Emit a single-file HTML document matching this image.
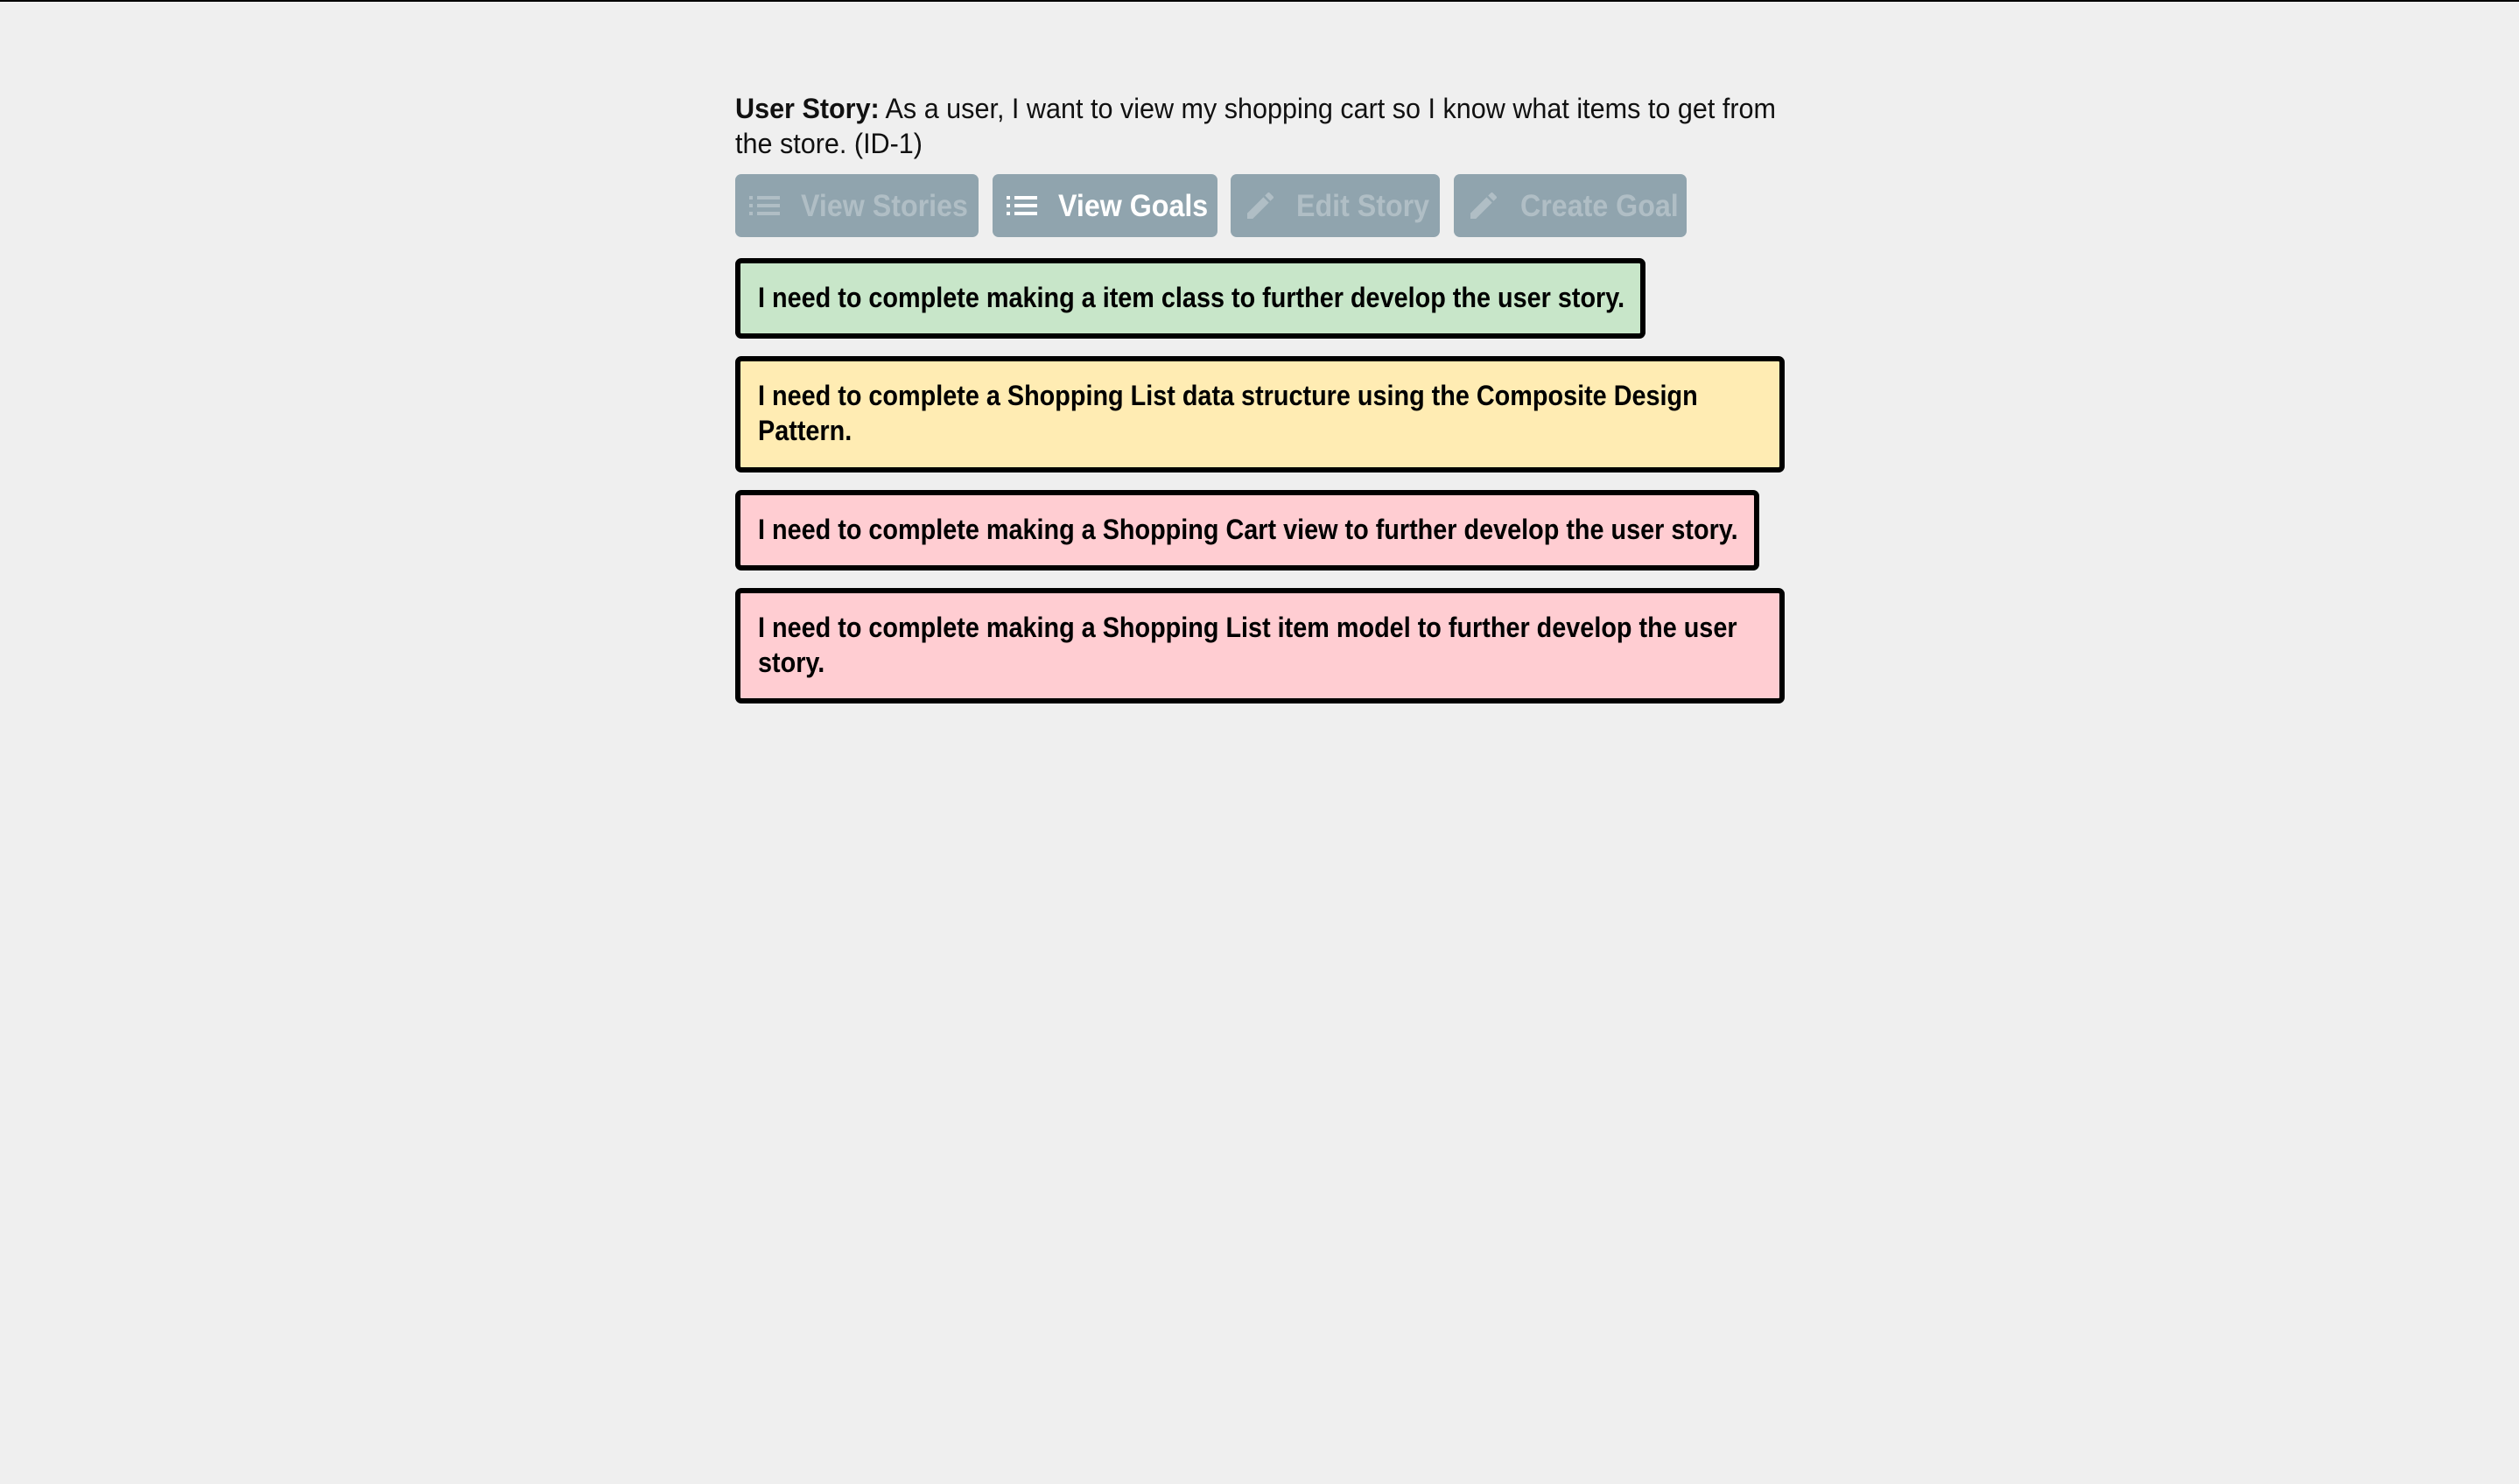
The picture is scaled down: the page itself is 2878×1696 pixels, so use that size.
<!DOCTYPE html>
<html><head><meta charset="utf-8"><style>
html,body{margin:0;padding:0;}
body{width:2878px;height:1696px;background:#efefef;border-top:2px solid #000;box-sizing:border-box;position:relative;font-family:"Liberation Sans",sans-serif;overflow:hidden;}
.s{position:absolute;white-space:nowrap;transform-origin:left center;}
.t{font-size:32px;color:#111;transform:scaleX(0.955);}
.btn{position:absolute;top:197px;height:72px;background:#90a4ae;border-radius:7px;}
.btn span{position:absolute;top:17px;font-size:35px;font-weight:bold;white-space:nowrap;transform:scaleX(0.92);transform-origin:left center;color:#b0bec5;}
.btn svg{position:absolute;top:22px;}
.card{position:absolute;left:840px;border:6px solid #000;border-radius:7px;box-sizing:border-box;}
.card .s{font-size:32px;font-weight:bold;color:#000;transform:scaleX(0.90);left:20px;}
</style></head><body>
<div class="s t" style="left:840px;top:104px;"><b>User Story:</b> As a user, I want to view my shopping cart so I know what items to get from</div>
<div class="s t" style="left:840px;top:144px;">the store. (ID-1)</div>

<div class="btn" style="left:840px;width:278px;">
<svg width="40" height="28" viewBox="0 0 40 28" style="left:16px"><g fill="#b0bec5"><rect x="0" y="3" width="4" height="4"/><rect x="0" y="12" width="4" height="4"/><rect x="0" y="21" width="4" height="4"/><rect x="9" y="3" width="26" height="4"/><rect x="9" y="12" width="26" height="4"/><rect x="9" y="21" width="26" height="4"/></g></svg>
<span style="left:75px">View Stories</span></div>
<div class="btn" style="left:1134px;width:257px;">
<svg width="40" height="28" viewBox="0 0 40 28" style="left:16px"><g fill="#fff"><rect x="0" y="3" width="4" height="4"/><rect x="0" y="12" width="4" height="4"/><rect x="0" y="21" width="4" height="4"/><rect x="9" y="3" width="26" height="4"/><rect x="9" y="12" width="26" height="4"/><rect x="9" y="21" width="26" height="4"/></g></svg>
<span style="left:75px;color:#fff">View Goals</span></div>
<div class="btn" style="left:1406px;width:239px;">
<svg width="40" height="40" viewBox="0 0 24 24" style="left:14px;top:16px"><path fill="#b0bec5" d="M3 17.25V21h3.75L17.81 9.94l-3.75-3.75L3 17.25zM20.71 7.04a1 1 0 000-1.41l-2.34-2.34a1 1 0 00-1.41 0l-1.83 1.83 3.75 3.75 1.83-1.83z"/></svg>
<span style="left:75px">Edit Story</span></div>
<div class="btn" style="left:1661px;width:266px;">
<svg width="40" height="40" viewBox="0 0 24 24" style="left:14px;top:16px"><path fill="#b0bec5" d="M3 17.25V21h3.75L17.81 9.94l-3.75-3.75L3 17.25zM20.71 7.04a1 1 0 000-1.41l-2.34-2.34a1 1 0 00-1.41 0l-1.83 1.83 3.75 3.75 1.83-1.83z"/></svg>
<span style="left:76px">Create Goal</span></div>

<div class="card" style="top:293px;width:1040px;height:92px;background:#c8e6c9;">
<div class="s" style="top:21px">I need to complete making a item class to further develop the user story.</div></div>
<div class="card" style="top:405px;width:1199px;height:133px;background:#ffecb3;">
<div class="s" style="top:21px">I need to complete a Shopping List data structure using the Composite Design</div>
<div class="s" style="top:61px">Pattern.</div></div>
<div class="card" style="top:558px;width:1170px;height:92px;background:#ffcdd2;">
<div class="s" style="top:21px">I need to complete making a Shopping Cart view to further develop the user story.</div></div>
<div class="card" style="top:670px;width:1199px;height:132px;background:#ffcdd2;">
<div class="s" style="top:21px">I need to complete making a Shopping List item model to further develop the user</div>
<div class="s" style="top:61px">story.</div></div>
</body></html>
